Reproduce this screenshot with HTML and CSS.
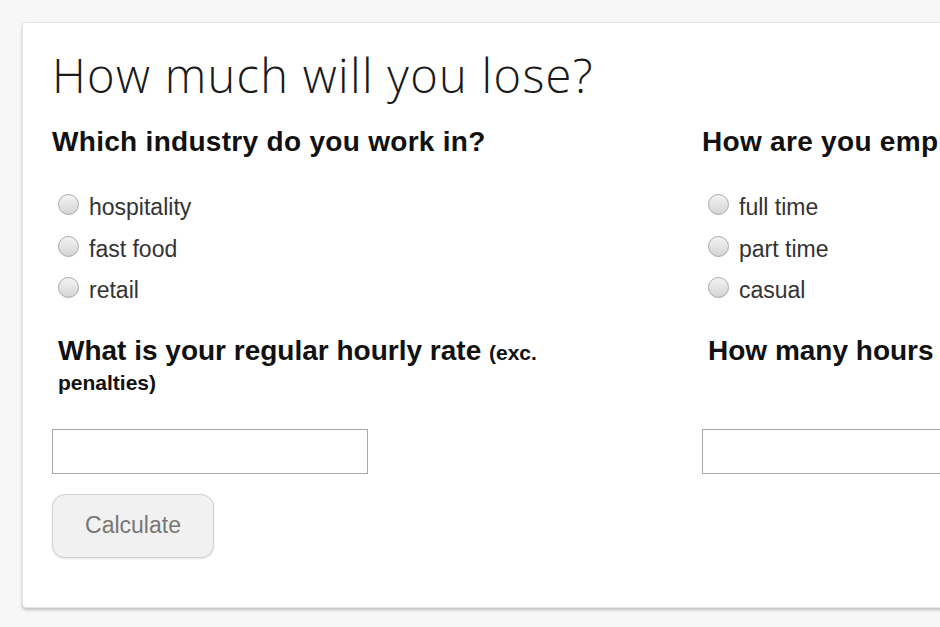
FILE: index.html
```html
<!DOCTYPE html>
<html>

<head>
    <meta charset="UTF-8">
    <title>How much will you lose?</title>
    <link rel="stylesheet" href="styles.css">
</head>

<body>
    <div class="card">
        <h1 class="title">How much will you lose?</h1>
        <div class="cols">
            <!-- 左列 -->
            <div class="col">
                <h2 class="q">Which industry do you work in?</h2>
                <ul class="opts">
                    <li><label><input type="radio" name="industry"> hospitality</label></li>
                    <li><label><input type="radio" name="industry"> fast food</label></li>
                    <li><label><input type="radio" name="industry"> retail</label></li>
                </ul>
                <h3 class="q2">What is your regular hourly rate <small>(exc. penalties)</small></h3>
                <input type="text" class="field">
                <div>
                    <button class="btn">Calculate</button>
                </div>
            </div>
            <!-- 右列 -->
            <div class="col">
                <h2 class="q">How are you employed?</h2>
                <ul class="opts">
                    <li><label><input type="radio" name="type"> full time</label></li>
                    <li><label><input type="radio" name="type"> part time</label></li>
                    <li><label><input type="radio" name="type"> casual</label></li>
                </ul>
                <h3 class="q2 wide">How many hours do you work on weekends?</h3>
                <input type="text" class="field">
            </div>
        </div>
    </div>
</body>
</html>
```

FILE: styles.css
```css
* {
    margin: 0;
    padding: 0;
    box-sizing: border-box;
}

html,
body {
    overflow: hidden;
}

body {
    background-color: #f7f7f7;
    font-family: "Liberation Sans", Arial, sans-serif;
    color: #111;
    padding: 22px 0 0 22px;
    height: 627px;
}

.card {
    width: 1400px;
    height: 586px;
    background-color: #fff;
    border: 1px solid #e6e6e6;
    border-radius: 4px;
    box-shadow: 0 2px 3px rgba(0, 0, 0, 0.22);
    padding: 24px 29px;
}

.title {
    font-family: "Open Sans", sans-serif;
    font-weight: 300;
    font-size: 47px;
    line-height: 56px;
    color: #1a1a1a;
    letter-spacing: 1.3px;
}

.cols {
    display: grid;
    grid-template-columns: 650px 650px;
    margin-top: 22px;
}

.q {
    font-size: 28px;
    line-height: 34px;
    font-weight: bold;
    letter-spacing: 0.3px;
    white-space: nowrap;
}

.opts {
    list-style: none;
    margin-top: 35px;
    padding-left: 6px;
}

.opts li {
    height: 41.5px;
    font-size: 23px;
    color: #333;
}

.opts label {
    display: flex;
    align-items: center;
    gap: 10px;
}

.opts input {
    appearance: none;
    -webkit-appearance: none;
    width: 21px;
    height: 21px;
    border-radius: 50%;
    border: 1px solid #a8a8a8;
    background: linear-gradient(#f4f4f4, #d4d4d4);
    margin-top: -6px;
}

.q2 {
    font-size: 28px;
    line-height: 30px;
    font-weight: bold;
    padding-left: 6px;
    margin-top: 17px;
    width: 540px;
    min-height: 60px;
}

.q2 small {
    font-size: 21px;
    line-height: 26px;
}

.q2.wide {
    width: auto;
    white-space: nowrap;
}

.field {
    display: block;
    width: 316px;
    height: 45px;
    border: 1px solid #a9a9a9;
    margin-top: 33px;
    font-size: 18px;
}

.col:last-child .field {
    width: 500px;
}

.btn {
    margin-top: 20px;
    width: 162px;
    height: 64px;
    border: 1px solid #d2d2d2;
    border-radius: 13px;
    background-color: #f1f1f1;
    box-shadow: 0 1px 2px rgba(0, 0, 0, 0.12);
    font-family: "Liberation Sans", Arial, sans-serif;
    font-size: 23px;
    color: #777;
}
```
